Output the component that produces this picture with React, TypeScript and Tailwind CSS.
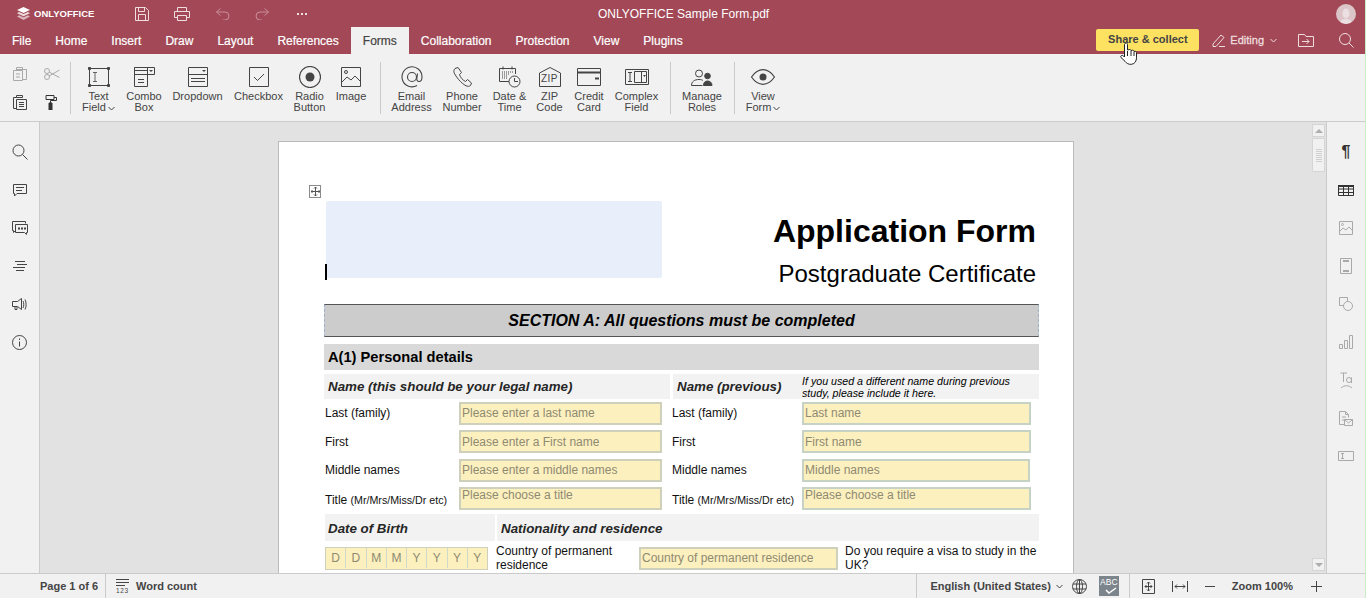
import type { ReactNode } from 'react';

type IconProps = { w: number; h: number; c?: string; children: ReactNode };

// small wrapper so every drawn icon shares the same stroke setup
function Ico({ w, h, c = '#444444', children }: IconProps) {
  return (
    <svg width={w} height={h} viewBox={`0 0 ${w} ${h}`} fill="none" stroke={c} strokeWidth={1} className="block shrink-0">
      {children}
    </svg>
  );
}

const Chevron = ({ c = '#444444' }: { c?: string }) => (
  <svg width="7" height="5" viewBox="0 0 7 5" fill="none" stroke={c} className="inline-block">
    <path d="M.5 1l3 3 3-3" />
  </svg>
);

const groupPads = ['pl-[5px] pr-[8px]', 'pl-[7px] pr-[6px]', 'pl-[5px] pr-[6px]', 'pl-[5px] pr-[6px]'];

const toolGroups = [
  [
    {
      w: 45,
      label: ['Text', 'Field'],
      more: true,
      icon: (
        <Ico w={24} h={22}>
          <path d="M2.500 2.500h19v17h-19z" />
          <path d="M1.500 1.500h2v2h-2zM20.500 1.500h2v2h-2zM1.500 18.500h2v2h-2zM20.500 18.500h2v2h-2z" fill="#444444" />
          <path d="M6 6.500h4M6 15.500h4M8 6.500v9" strokeWidth=".8" />
        </Ico>
      ),
    },
    {
      w: 46,
      label: ['Combo', 'Box'],
      icon: (
        <Ico w={21} h={20}>
          <path d="M.5 3.500h13M13.500 .5h7v7h-7zM.5.5v19h13V.5zM.5.5h13M.5 7.500h13M4 12.500h6M4 15.500h6" />
          <path d="M15 3h4l-2 2z" fill="#444444" stroke="none" />
        </Ico>
      ),
    },
    {
      w: 61,
      label: ['Dropdown'],
      icon: (
        <Ico w={20} h={20}>
          <path d="M.5.5h19v19H.5zM.5 7.500h19M3 11.500h14M3 14.500h14" />
          <path d="M14 3h4l-2 2z" fill="#444444" stroke="none" />
        </Ico>
      ),
    },
    {
      w: 61,
      label: ['Checkbox'],
      icon: (
        <Ico w={20} h={20}>
          <path d="M.5.5h19v19H.5zM5 10l3.500 3.500L15 7" />
        </Ico>
      ),
    },
    {
      w: 41,
      label: ['Radio', 'Button'],
      icon: (
        <Ico w={22} h={22}>
          <circle cx="11" cy="11" r="10.500" strokeWidth="1.200" />
          <circle cx="11" cy="11" r="4.500" fill="#444444" stroke="none" />
        </Ico>
      ),
    },
    {
      w: 42,
      label: ['Image'],
      icon: (
        <Ico w={20} h={20}>
          <path d="M.5.5h19v19H.5zM1 15l5-5 4 3 4-4 5 5" />
          <circle cx="5" cy="5" r="1.500" />
        </Ico>
      ),
    },
  ],
  [
    {
      w: 47,
      label: ['Email', 'Address'],
      icon: (
        <Ico w={22} h={22}>
          <path d="M16 19.500A10 10 0 1 1 21 11c0 3-1.300 4.500-3 4.500s-2.500-1.500-2-4l.5-4" strokeWidth="1.100" />
          <circle cx="11" cy="11" r="4.500" strokeWidth="1.100" />
        </Ico>
      ),
    },
    {
      w: 54,
      label: ['Phone', 'Number'],
      icon: (
        <Ico w={19} h={20}>
          <path d="M2 1.500l3-1 3.500 5-2 2c.5 2.500 3.500 6 6 7l2-2 4 3.500-1 2.500c-1 1-3 1-4.500.3C8 16 3 10 1 5.500.7 4 1 2.500 2 1.500z" />
        </Ico>
      ),
    },
    {
      w: 41,
      label: ['Date &', 'Time'],
      icon: (
        <Ico w={22} h={22}>
          <path d="M10 15.500H.5v-13h16V8M4 .5v3M13 .5v3" />
          <path d="M3 6h11M3 8h7M3 10h6M3 12h5" strokeDasharray="1 1" />
          <circle cx="15.500" cy="15.500" r="5.500" />
          <path d="M15.500 12v3.500H19" />
        </Ico>
      ),
    },
    {
      w: 39,
      label: ['ZIP', 'Code'],
      icon: (
        <div className="relative">
          <Ico w={22} h={20}>
            <path d="M.5 19.500V6L11 .5 21.500 6v13.500z" />
          </Ico>
          <span className="absolute left-0 right-0 top-[7px] text-center text-[10px] leading-[10px] tracking-[0.5px] text-[#444444]">ZIP</span>
        </div>
      ),
    },
    {
      w: 40,
      label: ['Credit', 'Card'],
      icon: (
        <Ico w={24} h={18}>
          <path d="M.5.5h23v17H.5z" />
          <path d="M1 4.500h22" strokeWidth="2" />
          <path d="M18 10.500h4" strokeWidth="2" />
        </Ico>
      ),
    },
    {
      w: 55,
      label: ['Complex', 'Field'],
      icon: (
        <Ico w={24} h={16}>
          <path d="M.5.5h23v15H.5zM9.500 2.500h12v11h-12zM16.500 2.500v11M3 3.500h4M3 12.500h4M5 3.500v9" />
          <path d="M18 6h3l-1.500 2z" fill="#444444" stroke="none" />
        </Ico>
      ),
    },
  ],
  [
    {
      w: 52,
      label: ['Manage', 'Roles'],
      icon: (
        <Ico w={22} h={17}>
          <circle cx="8" cy="4.500" r="3.500" />
          <path d="M.5 16.500c0-4 3-6 7.500-6 2 0 3 .3 4 1M.5 16.500h11" />
          <circle cx="16.500" cy="7" r="2.800" fill="#444444" />
          <path d="M12.500 16.500c0-3 1.500-4.500 4-4.500s4.500 1.500 4.500 4.500z" fill="#444444" />
        </Ico>
      ),
    },
  ],
  [
    {
      w: 46,
      label: ['View', 'Form'],
      more: true,
      icon: (
        <Ico w={24} h={16}>
          <path d="M.5 8C4 3 8 .7 12 .7S20 3 23.500 8C20 13 16 15.300 12 15.300S4 13 .5 8z" strokeWidth="1.200" />
          <circle cx="12" cy="8" r="3.500" fill="#444444" stroke="none" />
        </Ico>
      ),
    },
  ],
];

const tabs = ['File', 'Home', 'Insert', 'Draw', 'Layout', 'References', 'Forms', 'Collaboration', 'Protection', 'View', 'Plugins'];

const leftIcons = [
  <Ico w={16} h={16} key="search">
    <circle cx="6.500" cy="6.500" r="5.500" />
    <path d="M10.500 10.500l5 5" />
  </Ico>,
  <Ico w={14} h={13} key="comment">
    <path d="M.5.5h13v9H4l-2.500 2.500v-2.500h-1zM3 3.500h8M3 6.500h6" />
  </Ico>,
  <Ico w={16} h={14} key="chat">
    <path d="M13.500 2.500V.5H.5v9h1v2l2-2M3.500 3.500h12v8h-1v2l-2-2h-9z" />
    <path d="M6 7.500h2M9 7.500h2M12 7.500h2" strokeWidth="2" />
  </Ico>,
  <Ico w={14} h={11} key="nav">
    <path d="M2 .5h10M4 3.500h10M0 6.500h12M3 9.500h8" />
  </Ico>,
  <Ico w={15} h={13} key="speaker">
    <path d="M.5 3.500h5l4-3v11l-4-3h-5zM3 8.500v3h2v-3M11 3c1 2 1 5 0 7M13 1.500c1.500 3 1.500 7 0 10" />
  </Ico>,
  <Ico w={15} h={15} key="info">
    <circle cx="7.500" cy="7.500" r="7" />
    <path d="M7.500 6.500v5M7.500 3.500v1.500" />
  </Ico>,
];

const rightIcons = [
  <span key="para" className="text-[16px] leading-[16px] font-bold text-[#333333]">¶</span>,
  <Ico w={16} h={11} c="#333333" key="table">
    <path d="M.5.5h15v10H.5zM.5 4h15M.5 7.500h15M5.500 .5v10M10.500 .5v10" />
    <path d="M0 0h16v2H0z" fill="#333333" stroke="none" />
  </Ico>,
  <Ico w={14} h={14} c="#a9a9a9" key="img">
    <path d="M.5.5h13v13H.5zM1 10l3-3 3 2 3-3 3.500 3.500" />
    <circle cx="3.500" cy="3.500" r="1" />
  </Ico>,
  <Ico w={12} h={16} c="#a9a9a9" key="page">
    <path d="M.5.5h11v15H.5z" />
    <path d="M3 3h6M3 13h6" strokeWidth="2" />
  </Ico>,
  <Ico w={14} h={14} c="#a9a9a9" key="shape">
    <path d="M4 8.500H.5V.5h8V4" />
    <circle cx="9" cy="9" r="4.500" />
  </Ico>,
  <Ico w={14} h={14} c="#a9a9a9" key="chart">
    <path d="M.5 9.500h3v4h-3zM5.500 5.500h3v8h-3zM10.500 .5h3v13h-3z" />
  </Ico>,
  <Ico w={13} h={17} c="#a9a9a9" key="art">
    <path d="M.5 1h6.500M3.500 1v9M1 16c3-3 8-3 11 0" />
    <circle cx="9" cy="8" r="2.500" />
    <path d="M11.500 5.500V11" />
  </Ico>,
  <Ico w={14} h={15} c="#a9a9a9" key="merge">
    <path d="M5 13.500H.5V.5h6l3 3v3M6.500 .5v3h3M3 6h4M3 9h2" />
    <path d="M5.500 8.500h8v6h-8zM5.500 8.500l4 3.500 4-3.500" />
  </Ico>,
  <Ico w={16} h={10} c="#a9a9a9" key="field">
    <path d="M.5.500h15v9H.5zM3 2.500h3M3 7.500h3M4.500 2.500v5" />
  </Ico>,
];

function FormInput({ text, className = '', alignTop = false }: { text: string; className?: string; alignTop?: boolean }) {
  return (
    <div className={`h-[23px] border-2 bg-[#fcf0bf] pl-[1px] text-[12px] text-[#8f8a72] flex ${alignTop ? 'items-start leading-[13px]' : 'items-center'} ${className}`}>
      {text}
    </div>
  );
}

function Label({ children, w, className = '' }: { children: ReactNode; w: string; className?: string }) {
  return <div className={`${w} shrink-0 text-[12px] leading-[14px] text-[#111111] ${className}`}>{children}</div>;
}

const nameRows = [
  { label: 'Last (family)', a: 'Please enter a last name', b: 'Last name', mt: 'mt-[3px]', nudge: 'pb-[1px]' },
  { label: 'First', a: 'Please enter a First name', b: 'First name', mt: 'mt-[5px]', nudge: '' },
  { label: 'Middle names', a: 'Please enter a middle names', b: 'Middle names', mt: 'mt-[6px]', nudge: 'pb-[1px]' },
];

export default function App() {
  return (
    <div className="relative flex h-[598px] w-[1366px] flex-col overflow-hidden border-r border-[#c8eec4] bg-[#f1f1f1] font-['Liberation_Sans',Arial,sans-serif] text-[#444444]">
      {/* title + tabs */}
      <header className="h-[54px] shrink-0 bg-[#a24856] text-white">
        <div className="relative flex h-[27px] items-center">
          <div className="ml-[17px] flex w-[118px] items-center gap-[4px]">
            <svg width="13" height="13" viewBox="0 0 13 13" fill="#ffffff" className="shrink-0">
              <path d="M6.500 0L13 3 6.500 6 0 3z" />
              <path d="M2 5l4.500 2L11 5l2 1.200-6.500 3-6.500-3z" opacity=".8" />
              <path d="M2 8.300l4.500 2 4.500-2 2 1.200L6.500 13 0 9.500z" opacity=".6" />
            </svg>
            <span className="text-[9.500px] font-bold leading-none">ONLYOFFICE</span>
          </div>
          <Ico w={14} h={14} c="#f0dde0">
            <path d="M.5.5h10l3 3v10H.5zM3.500 .5v4h6v-4M3.500 13.500v-6h7v6" />
          </Ico>
          <div className="ml-[25px]">
            <Ico w={16} h={14} c="#f0dde0">
              <path d="M3.500 4.500V.5h9v4M3.500 10.500h-3v-6h15v6h-3M3.500 8.500h9v5h-9z" />
            </Ico>
          </div>
          <div className="ml-[26px]">
            <Ico w={14} h={12} c="#c88f98">
              <path d="M4.500 .5L.5 4l4 3.500M.5 4H9a4 4 0 0 1 0 8H7" />
            </Ico>
          </div>
          <div className="ml-[25px]">
            <Ico w={14} h={12} c="#c88f98">
              <path d="M9.500 .5l4 3.500-4 3.500M13.500 4H5a4 4 0 0 0 0 8h2" />
            </Ico>
          </div>
          <span className="ml-[28px] flex gap-[2px]">
            <i className="h-[2px] w-[2px] bg-[#f0dde0]" />
            <i className="h-[2px] w-[2px] bg-[#f0dde0]" />
            <i className="h-[2px] w-[2px] bg-[#f0dde0]" />
          </span>
          <span className="ml-[291px] text-[12px] leading-none">ONLYOFFICE Sample Form.pdf</span>
          <div className="ml-auto mr-[9px] flex h-[20px] w-[20px] items-end justify-center overflow-hidden rounded-full bg-[#dcc5c9]">
            <svg width="14" height="16" viewBox="0 0 14 16" fill="#ecdfe1">
              <ellipse cx="7" cy="5.500" rx="3.500" ry="5" />
              <path d="M1 16c0-4 3-5 6-5s6 1 6 5z" />
            </svg>
          </div>
        </div>
        <div className="flex h-[27px] items-stretch">
          {tabs.map((t) => (
            <div key={t} className={`flex items-center px-3 text-[12px] [-webkit-text-stroke:0.2px] ${t === 'Forms' ? 'bg-[#f1f1f1] text-[#444444]' : ''}`}>
              {t}
            </div>
          ))}
          <div className="ml-auto mb-[3px] mt-[2px] flex w-[103px] items-center justify-center rounded-[2px] bg-[#fde161] pb-[1px] text-[11px] font-bold text-[#444444]">
            Share &amp; collect
          </div>
          <div className="ml-[13px] flex items-center">
            <Ico w={13} h={13} c="#f0dde0">
              <path d="M1 10l8-9 3 2.500-8 9H1zM7 12.500h6" />
            </Ico>
            <span className="ml-[5px] text-[11px] text-[#eedcdf] [-webkit-text-stroke:0.3px]">Editing</span>
            <span className="ml-[6px] flex">
              <Chevron c="#eedcdf" />
            </span>
          </div>
          <div className="ml-[21px] flex items-center">
            <Ico w={16} h={13} c="#f0dde0">
              <path d="M.5.5h6l1.500 2h7.500v10H.5zM4 7.500h7M8.500 5l2.500 2.500L8.500 10" />
            </Ico>
          </div>
          <div className="ml-[25px] mr-[11px] flex items-center">
            <Ico w={15} h={15} c="#f0dde0">
              <circle cx="6" cy="6" r="5.500" />
              <path d="M10 10l4.500 4.500" />
            </Ico>
          </div>
        </div>
      </header>

      {/* forms toolbar */}
      <div className="flex h-[68px] shrink-0 items-start border-b border-[#cbcbcb] bg-[#f1f1f1]">
        <div className="grid h-full w-[70px] shrink-0 grid-cols-2 content-start gap-y-[14px] pl-[13px] pt-[13px]">
          <Ico w={14} h={14} c="#a9a9a9">
            <path d="M3.500 3.500V.5h6v3M.5 3.500h9v10H.5zM4 2.500h9.500v10h-4M3 7h4M3 10h4" />
          </Ico>
          <div className="ml-[2px] mt-[1px]">
            <Ico w={16} h={12} c="#a9a9a9">
              <circle cx="3" cy="3" r="2.500" />
              <circle cx="3" cy="9" r="2.500" />
              <path d="M5 4l10.500 5.500M5 8L15.500 2" />
            </Ico>
          </div>
          <Ico w={14} h={15}>
            <path d="M3.500 2.500H.5v11h3M3.500 .5h6v2h-6zM3.500 4.500h10v10h-10zM6 7.500h5M6 9.500h5M6 11.500h5" />
          </Ico>
          <div className="ml-[3px]">
            <Ico w={12} h={15} c="#333333">
              <path d="M1 .5h8v4H1zM9 2.500h2.500v3h-6v3" />
              <path d="M4 8h3v7H4z" fill="#333333" />
            </Ico>
          </div>
        </div>
        {toolGroups.map((group, gi) => (
          <div key={gi} className={`mt-[8px] flex h-[52px] items-start self-start border-l border-[#cbcbcb] ${groupPads[gi]}`}>
            {group.map((item) => (
              <div key={item.label.join()} className="flex flex-col items-center" style={{ width: item.w }}>
                <div className="mt-[2px] flex h-[26px] items-center justify-center">{item.icon}</div>
                <div className="mt-[1px] text-center text-[11px] leading-[11px] text-[#444444]">
                  {item.label.map((line, i) => (
                    <div key={line} className="whitespace-nowrap">
                      {line}
                      {item.more && i === 1 ? (
                        <span className="ml-[2px]">
                          <Chevron />
                        </span>
                      ) : null}
                    </div>
                  ))}
                </div>
              </div>
            ))}
          </div>
        ))}
      </div>

      {/* workspace */}
      <div className="flex min-h-0 flex-1">
        <aside className="flex w-[40px] shrink-0 flex-col items-center border-r border-[#cbcbcb] pt-[11px]">
          {leftIcons.map((icon, i) => (
            <div key={i} className="flex h-[38px] w-full items-center justify-center">
              {icon}
            </div>
          ))}
        </aside>

        <main className="min-w-0 flex-1 overflow-hidden bg-[#e2e2e2] pl-[238px] pt-[19px]">
          <div className="relative h-[500px] w-[796px] border border-[#bbbbbb] bg-white pl-[45px] pr-[34px] pt-[59px]">
            {/* table move handle */}
            <div className="absolute left-[30px] top-[43px] flex h-[13px] w-[12px] items-center justify-center border border-[#8a8a8a] bg-white">
              <Ico w={9} h={9} c="#555555">
                <path d="M4.500 0v9M0 4.500h9M3 1.500L4.500 0 6 1.500M3 7.500L4.500 9 6 7.500M1.500 3L0 4.500 1.500 6M7.500 3L9 4.500 7.500 6" />
              </Ico>
            </div>

            <div className="flex h-[77px] items-start">
              <div className="relative ml-[2px] h-[77px] w-[336px] shrink-0 rounded-[2px] bg-[#e8effb]">
                <i className="absolute bottom-[-2px] left-[-1px] h-[16px] w-[2px] bg-black" />
              </div>
              <div className="flex-1 pr-[3px] text-right text-black">
                <div className="mt-[12px] text-[32px] font-bold leading-[36px]">Application Form</div>
                <div className="mt-[11px] text-[24px] leading-[28px]">Postgraduate Certificate</div>
              </div>
            </div>

            <div className="mt-[26px] flex h-[33px] items-center justify-center border border-dashed border-x-[#9db3cc] border-y-[#555555] bg-[#cccccc] text-[16px] font-bold italic text-black [border-bottom-style:solid] [border-top-style:solid]">
              SECTION A: All questions must be completed
            </div>

            <div className="mt-[7px] flex h-[26px] items-center bg-[#d9d9d9] pl-[4px] text-[14.670px] font-bold text-black">A(1) Personal details</div>

            <div className="mt-[4px] flex h-[25px] gap-[3px]">
              <div className="flex w-[346px] items-center bg-[#f2f2f2] pl-[4px] text-[13.330px] font-bold italic text-[#262626]">
                Name (this should be your legal name)
              </div>
              <div className="flex flex-1 items-center bg-[#f2f2f2] pl-[4px]">
                <div className="w-[125px] shrink-0 text-[13.330px] font-bold italic text-[#262626]">Name (previous)</div>
                <div className="text-[10.670px] italic leading-[12px] text-black">
                  If you used a different name during previous
                  <br />
                  study, please include it here.
                </div>
              </div>
            </div>

            {nameRows.map((r) => (
              <div key={r.label} className={`${r.mt} flex items-center`}>
                <div className="flex w-[348px] items-center pl-[1px]">
                  <Label w="w-[134px]" className={r.nudge}>{r.label}</Label>
                  <FormInput text={r.a} className={`w-[203px] border-[#cfd0bc] ${r.nudge}`} />
                </div>
                <Label w="w-[130px]" className={r.nudge}>{r.label}</Label>
                <FormInput text={r.b} className={`${r.label === 'Middle names' ? 'w-[228px]' : 'w-[229px]'} border-[#c6d3c4] ${r.nudge}`} />
              </div>
            ))}

            <div className="mt-[5px] flex items-center">
              <div className="flex w-[348px] items-center pl-[1px]">
                <Label w="w-[134px]" className="pt-[2px]">
                  Title <span className="text-[10.670px]">(Mr/Mrs/Miss/Dr etc)</span>
                </Label>
                <FormInput text="Please choose a title" alignTop className="w-[203px] border-[#cfd0bc]" />
              </div>
              <Label w="w-[130px]" className="pt-[2px]">
                Title <span className="text-[10.670px]">(Mr/Mrs/Miss/Dr etc)</span>
              </Label>
              <FormInput text="Please choose a title" alignTop className="w-[229px] border-[#c6d3c4]" />
            </div>

            <div className="mt-[4px] flex h-[27px] gap-[2px] pl-[1px] text-[13.330px] font-bold italic text-[#262626]">
              <div className="flex w-[170px] items-center bg-[#f2f2f2] pl-[3px] pt-[3px]">Date of Birth</div>
              <div className="flex flex-1 items-center bg-[#f2f2f2] pl-[4px] pt-[3px]">Nationality and residence</div>
            </div>

            <div className="mt-[6px] flex items-start pl-[1px]">
              <div className="flex h-[23px] w-[163px] shrink-0 border border-[#cfd0bc] bg-[#fcf0bf] pb-[1px]">
                {['D', 'D', 'M', 'M', 'Y', 'Y', 'Y', 'Y'].map((ch, i) => (
                  <div key={i} className="flex flex-1 items-center justify-center border-r border-[#cfdacb] text-[12px] text-[#8f8a72] last:border-r-0">
                    {ch}
                  </div>
                ))}
              </div>
              <div className="ml-[8px] mt-[-3px] w-[143px] shrink-0 text-[12px] leading-[14px] text-[#111111]">
                Country of permanent
                <br />
                residence
              </div>
              <FormInput text="Country of permanent residence" className="w-[199px] shrink-0 border-[#cfd0bc] pb-[1px]" />
              <div className="ml-[7px] mt-[-3px] w-[200px] shrink-0 text-[12px] leading-[14px] text-[#111111]">Do you require a visa to study in the UK?</div>
            </div>
          </div>
        </main>

        {/* page scrollbar */}
        <div className="flex w-[15px] shrink-0 flex-col bg-[#e2e2e2] pl-[1px] pt-[2px]">
          <div className="flex h-[13px] w-[13px] items-center justify-center border border-[#d5d5d5] bg-[#f1f1f1]">
            <i className="h-0 w-0 border-x-[4px] border-b-[4px] border-x-transparent border-b-[#adadad]" />
          </div>
          <div className="mt-[1px] flex h-[34px] w-[13px] flex-col items-center justify-center gap-[1px] rounded-[1px] border border-[#d5d5d5] bg-[#f1f1f1]">
            {[0, 1, 2, 3, 4, 5, 6].map((n) => (
              <i key={n} className="h-[1px] w-[6px] bg-[#cfcfcf]" />
            ))}
          </div>
          <div className="mb-[2px] mt-auto flex h-[13px] w-[13px] items-center justify-center border border-[#d5d5d5] bg-[#f1f1f1]">
            <i className="h-0 w-0 border-x-[4px] border-t-[4px] border-x-transparent border-t-[#adadad]" />
          </div>
        </div>

        <aside className="flex w-[39px] shrink-0 flex-col items-center border-l border-[#cbcbcb] pt-[11px]">
          {rightIcons.map((icon, i) => (
            <div key={i} className="flex h-[38px] w-full items-center justify-center">
              {icon}
            </div>
          ))}
        </aside>
      </div>

      {/* status bar */}
      <footer className="flex h-[25px] shrink-0 items-center border-t border-[#cbcbcb] bg-[#f1f1f1] text-[11px] font-bold text-[#444444]">
        <span className="ml-[40px] w-[65px]">Page 1 of 6</span>
        <i className="h-full w-[1px] bg-[#cbcbcb]" />
        <div className="ml-[10px] w-[20px]">
          <svg width="13" height="14" viewBox="0 0 13 14" className="block">
            <path d="M0 .5h13M0 3.500h13M0 6.500h9" stroke="#444444" fill="none" />
            <text x="0" y="14" fontSize="6.500" fontWeight="400" letterSpacing=".6" fill="#444444">123</text>
          </svg>
        </div>
        <span>Word count</span>
        <i className="ml-auto h-full w-[1px] bg-[#cbcbcb]" />
        <span className="ml-[13px]">English (United States)</span>
        <span className="ml-[5px] flex">
          <Chevron />
        </span>
        <div className="ml-[9px]">
          <Ico w={15} h={15}>
            <circle cx="7.500" cy="7.500" r="7" />
            <ellipse cx="7.500" cy="7.500" rx="3" ry="7" />
            <path d="M7.500 .5v14M1 5h13M1 10h13" />
          </Ico>
        </div>
        <div className="relative ml-[12px] h-[20px] w-[20px] bg-[#7d858c] pt-[2px] text-center text-[8.500px] font-normal leading-[9px] text-white">
          ABC
          <svg width="12" height="8" viewBox="0 0 12 8" fill="none" stroke="#ffffff" strokeWidth="1.500" className="absolute bottom-[1px] left-[6px]">
            <path d="M1 3l3 3 7-5" />
          </svg>
        </div>
        <i className="ml-[10px] h-full w-[1px] bg-[#cbcbcb]" />
        <div className="ml-[12px]">
          <Ico w={13} h={15}>
            <path d="M.5.5h12v14H.5zM6.500 3v9M3 7.500h7M5 4.500L6.500 3 8 4.500M5 10.500L6.500 12 8 10.500M4.500 6L3 7.500 4.500 9M8.500 6L10 7.500 8.500 9" />
          </Ico>
        </div>
        <div className="ml-[17px]">
          <Ico w={16} h={11}>
            <path d="M.5 0v11M15.500 0v11M3 5.500h10M5 3.500l-2 2 2 2M11 3.500l2 2-2 2" />
          </Ico>
        </div>
        <div className="ml-[17px]">
          <Ico w={10} h={3}>
            <path d="M0 1.500h10" />
          </Ico>
        </div>
        <span className="ml-[17px]">Zoom 100%</span>
        <div className="ml-[18px] mr-[43px]">
          <Ico w={11} h={11}>
            <path d="M0 5.500h11M5.500 0v11" />
          </Ico>
        </div>
      </footer>

      {/* mouse pointer sitting over the share button */}
      <svg width="17" height="23" viewBox="0 0 17 23" className="absolute left-[1120px] top-[42px]">
        <path
          d="M5 1.500c1-1 2.500-.5 2.500 1V8l2-.5c1 0 1.500.5 1.500 1l1.500-.3c1 0 1.500.6 1.500 1.300l1-.2c.8 0 1.500.5 1.500 1.500v5c0 3-1.500 6-5 6.500-3 .3-5-1-6.500-3L1 15.500c-1-1.500 1-3 2.500-1.500l1 1V2.500z"
          fill="#ffffff"
          stroke="#222222"
        />
        <path d="M7.500 9v5M11 9v5M14 10v4" stroke="#222222" fill="none" />
      </svg>
    </div>
  );
}
